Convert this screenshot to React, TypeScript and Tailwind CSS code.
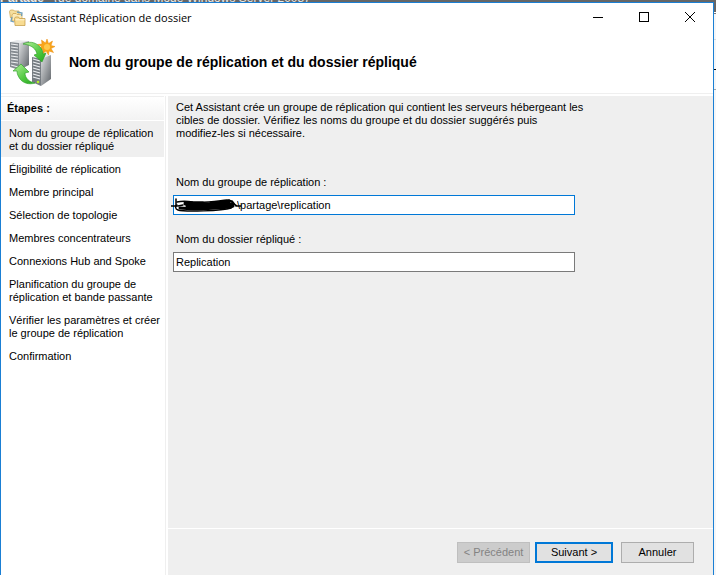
import React from 'react'

interface Step {
    id: string
    lines: string[]
}

const steps: Step[] = [
    { id: 'nom', lines: ['Nom du groupe de réplication', 'et du dossier répliqué'] },
    { id: 'eligibilite', lines: ['Éligibilité de réplication'] },
    { id: 'membre', lines: ['Membre principal'] },
    { id: 'topologie', lines: ['Sélection de topologie'] },
    { id: 'concentrateurs', lines: ['Membres concentrateurs'] },
    { id: 'connexions', lines: ['Connexions Hub and Spoke'] },
    { id: 'planification', lines: ['Planification du groupe de', 'réplication et bande passante'] },
    { id: 'verifier', lines: ['Vérifier les paramètres et créer', 'le groupe de réplication'] },
    { id: 'confirmation', lines: ['Confirmation'] },
]

const FoldersIcon: React.FC = () => (
    <svg width="17" height="17" viewBox="0 0 17 17" aria-hidden="true">
        <path d="M.5 2.500 1.500 1h3l1 1H10v7H1.500z" fill="#f5dfa0" stroke="#c9a14a" strokeWidth="0.700" />
        <path d="M3 6l1-1.500h3l1 1h5V12H3z" fill="#fbeab8" stroke="#c9a14a" strokeWidth="0.700" />
        <path d="M8 3l5 1-.500 3M3 8l-1 4 3 1" stroke="#6f9fb8" strokeWidth="1.300" fill="none" />
        <path d="M5.500 9.500 6.500 8h3l1 1.500h5.500v7H6z" fill="#f8dc92" stroke="#c2973f" strokeWidth="0.700" />
        <path d="M6.500 10.800h9" stroke="#fff6d8" />
    </svg>
)

const ServersIcon: React.FC = () => (
    <svg width="46" height="48" viewBox="0 0 46 48" aria-hidden="true">
        <defs>
            <linearGradient id="side" x1="0" y1="0" x2="1" y2="1">
                <stop offset="0" stopColor="#dfe1e3" />
                <stop offset="1" stopColor="#5d6267" />
            </linearGradient>
            <linearGradient id="arrow" x1="0" y1="0" x2="1" y2="1">
                <stop offset="0" stopColor="#b4f09a" />
                <stop offset="0.600" stopColor="#4fc83f" />
                <stop offset="1" stopColor="#25a51f" />
            </linearGradient>
        </defs>
        <path d="M1 4 8 2l12 1-10 2z" fill="#e8eaec" />
        <path d="M1 4l9 1v27l-9-3z" fill="#858b91" />
        <path d="M10 5l10-2v24L10 32z" fill="url(#side)" />
        <path
            d="M2 6l7 1M2 9l7 1M2 12l7 1M2 15l7 1M2 18l7 1M2 21l7 1M2 24l7 1M2 27l7 2"
            stroke="#eef0f2"
            strokeWidth="1.200"
        />
        <path d="M23 19l9-3 10 1-10 4z" fill="#e8eaec" />
        <path d="M23 19l9 2v27l-9-4z" fill="#767c82" />
        <path d="M32 21l10-4v24l-10 7z" fill="url(#side)" />
        <path
            d="M24 21l7 2M24 24l7 2M24 27l7 2M24 30l7 2M24 33l7 2M24 36l7 2M24 39l7 2"
            stroke="#eef0f2"
            strokeWidth="1.200"
        />
        <path
            d="M38 1l1.500 4.500L43.500 3 42 7.500l4 1-4 2 2.500 4-4.500-1.500-.500 4-2.500-4-3.500 3 .500-4.500-4.500.500 3-3.500-4-2 4.500-.500L32.500 2l4 3z"
            fill="#f9a51a"
            stroke="#e98b0c"
            strokeWidth="0.500"
        />
        <circle cx="38" cy="9" r="3" fill="#ffc84a" />
        <path
            d="M14 6c6-3 12-2 16 2 3 3 4 5 4 8l3-1-4 9-8-7 3-1c-1-5-5-9-14-10z"
            fill="url(#arrow)"
            stroke="#259a20"
            strokeWidth="0.600"
        />
        <path
            d="M26 45c-6 2-12 0-15-4-2-3-3-5-3-8H4l8-7 8 8-4 1c0 5 4 9 10 10z"
            fill="url(#arrow)"
            stroke="#259a20"
            strokeWidth="0.600"
        />
        <circle cx="29" cy="44" r="1.300" fill="#b8f02c" />
    </svg>
)

const Scribble: React.FC = () => (
    <svg
        className="pointer-events-none absolute top-0.5 -left-0.5"
        width="72"
        height="16"
        viewBox="0 0 72 16"
        fill="none"
        stroke="#000"
        strokeLinecap="round"
        aria-hidden="true"
    >
        <path d="M0 9h6M5 2v7" strokeWidth="1.500" />
        <path d="M6 5c4-1 10-1 16 0 12 1 24-1 34-2 7 0 8 6 4 8-9 3-47 4-53 2-3-1-3-4-1-5" strokeWidth="1.500" />
        <path d="M14 7c15-1 30 1 48 0M16 9h46M9 11c16 2 36 0 50-1M14 6h18M40 6l18-1" strokeWidth="3" />
        <path d="M7 9l5-1M61 4l4 5M58 3l8 6h4" strokeWidth="1.500" />
    </svg>
)

/* The window behind the wizard shows along the top and right edges. */
const BackgroundTop: React.FC = () => (
    <div className="flex h-0.5 shrink-0 items-end gap-2.5 overflow-hidden bg-[#666666] text-[12px] leading-[8px] whitespace-nowrap text-[#e8e8e8]">
        <b>Partage</b>
        <span>(de domaine dans Mode Windows Server 2008)</span>
    </div>
)

const BackgroundRight: React.FC = () => (
    <div className="flex w-0.5 shrink-0 flex-col bg-[#f4f6f8]">
        <div className="h-2.5 bg-[#666666]" />
        <div className="h-0.5 border-b border-[#777777] bg-white" />
        <div className="h-[26px] border-b border-[#d5d9dd]" />
        <div className="h-[30px] border-b border-black" />
        <div className="h-5 border-b border-[#a0a4a8]" />
    </div>
)

const TitleBar: React.FC = () => (
    <div className="flex h-7 items-center justify-between pl-2">
        <div className="flex items-center gap-1 font-['Open_Sans',sans-serif]">
            <FoldersIcon />
            <span>Assistant Réplication de dossier</span>
        </div>
        <div className="flex h-full">
            <button aria-label="Réduire" className="flex w-[46px] items-center justify-center">
                <svg width="10" height="10" stroke="#000" shapeRendering="crispEdges">
                    <path d="M0 5.500h10" />
                </svg>
            </button>
            <button aria-label="Agrandir" className="flex w-[46px] items-center justify-center">
                <svg width="10" height="10" stroke="#000" fill="none" shapeRendering="crispEdges">
                    <path d="M.5.5h9v9h-9z" />
                </svg>
            </button>
            <button aria-label="Fermer" className="flex w-[46px] items-center justify-center">
                <svg width="10" height="10" stroke="#000">
                    <path d="M0 0l10 10M10 0L0 10" />
                </svg>
            </button>
        </div>
    </div>
)

const StepsPanel: React.FC = () => (
    <nav className="w-[165px] shrink-0 border-r border-[#efefef] bg-white pr-px">
        <h2 className="flex h-6 items-center border-t border-[#efefef] bg-linear-to-b from-white to-[#f3f3f3] pl-1.5 font-bold">
            Étapes :
        </h2>
        <ol className="pt-px">
            {steps.map((step, index) => (
                <li
                    key={step.id}
                    aria-current={index === 0 ? 'step' : undefined}
                    className={`px-2 pt-1.5 pb-1 ${index === 0 ? 'bg-[#efefef]' : ''}`}
                >
                    {step.lines.map((line) => (
                        <span key={line} className="block whitespace-nowrap">
                            {line}
                        </span>
                    ))}
                </li>
            ))}
        </ol>
    </nav>
)

const NamesForm: React.FC = () => (
    <form id="names" className="flex-1 px-[5px] pt-[5px]">
        <p className="px-[3px]">
            Cet Assistant crée un groupe de réplication qui contient les serveurs hébergeant les
            <br />
            cibles de dossier. Vérifiez les noms du groupe et du dossier suggérés puis
            <br />
            modifiez-les si nécessaire.
        </p>
        <div className="mt-9 flex max-w-[402px] flex-col">
            <label htmlFor="group" className="px-[3px]">
                Nom du groupe de réplication :
            </label>
            <div className="relative mt-1.5">
                <input
                    id="group"
                    type="text"
                    defaultValue="\partage\replication"
                    className="block h-5 w-full border border-[#0078d7] bg-white pl-[63px] outline-none"
                />
                <Scribble />
            </div>
            <label htmlFor="folder" className="mt-[18px] px-[3px]">
                Nom du dossier répliqué :
            </label>
            <input
                id="folder"
                type="text"
                defaultValue="Replication"
                className="mt-1.5 block h-5 w-full border border-[#7a7a7a] bg-white px-0.5 outline-none"
            />
        </div>
    </form>
)

const Footer: React.FC = () => (
    <footer className="flex h-[47px] items-center justify-end border-t border-white pr-[19px]">
        <button
            disabled
            className="mr-[5px] h-[21px] w-[73px] border border-[#bfbfbf] bg-[#cccccc] text-[#838383]"
        >
            &lt; Précédent
        </button>
        <button type="submit" form="names" className="mr-2 h-[21px] w-[78px] border-2 border-[#0078d7] bg-[#e1e1e1]">
            Suivant &gt;
        </button>
        <button className="h-[21px] w-[73px] border border-[#adadad] bg-[#e1e1e1]">Annuler</button>
    </footer>
)

const App: React.FC = () => (
    <div className="flex min-h-screen flex-col font-['Liberation_Sans',Arial,sans-serif] text-[11px] leading-[13px] text-black">
        <BackgroundTop />
        <div className="flex flex-1">
            <div className="flex flex-1 flex-col border-x border-t border-[#1a7fd4] bg-white">
                <TitleBar />
                <header className="flex h-[62px] items-center gap-3.5 pl-2">
                    <ServersIcon />
                    <h1 className="text-[14px] font-bold">Nom du groupe de réplication et du dossier répliqué</h1>
                </header>
                <div className="flex flex-1 border-t border-[#efefef] pt-0.5">
                    <StepsPanel />
                    <main className="ml-0.5 flex flex-1 flex-col bg-[#efefef]">
                        <NamesForm />
                        <Footer />
                    </main>
                </div>
            </div>
            <BackgroundRight />
        </div>
    </div>
)

export default App
